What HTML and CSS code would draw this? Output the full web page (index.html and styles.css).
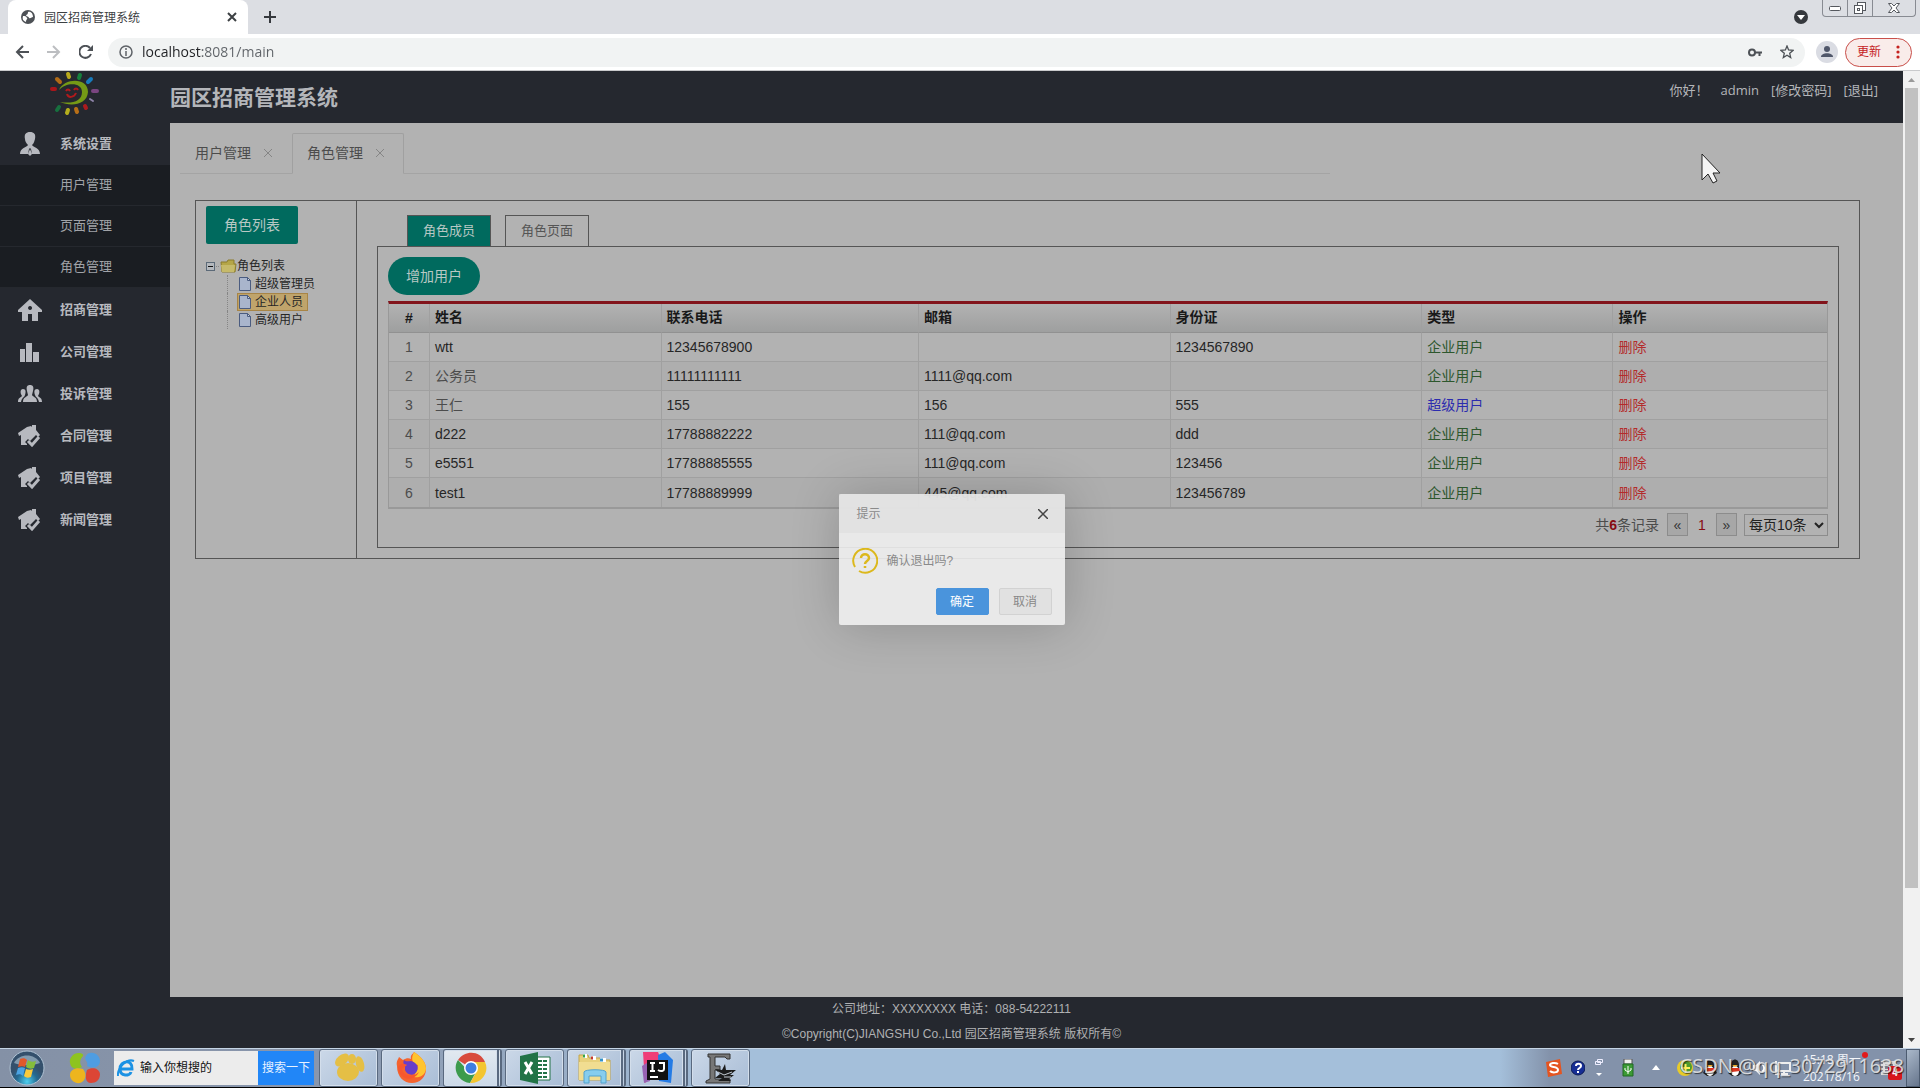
FILE: index.html
```html
<!DOCTYPE html>
<html lang="zh-CN">
<head>
<meta charset="utf-8">
<title>园区招商管理系统</title>
<link rel="stylesheet" href="styles.css">
</head>
<body>
<svg class="defs" aria-hidden="true">
  <symbol id="house-check" viewBox="0 0 24 22"><path fill="#b7b9bf" d="M0 8 9 2l4-1 1 1V0h4v5l4 5-2 2-2-2-6 6-2-2-3 3 2 2v1H3V10L1 11Z"/><path fill="none" stroke="#b7b9bf" stroke-width="3" d="m10 16 4 4 7-8"/></symbol>
  <symbol id="page-icon" viewBox="0 0 12 14"><path fill="#a9b5cc" stroke="#4b5c80" d="M.5.5h8l3 3v10H.5Z"/><path fill="#d0d6e2" stroke="#4b5c80" d="M8.500.5v3h3Z"/></symbol>
</svg>

<div class="tabstrip">
  <div class="browser-tab">
    <svg width="14" height="14" viewBox="0 0 14 14"><circle cx="7" cy="7" r="7" fill="#4d5156"/><path fill="#fff" d="M2 6c2 0 3 0 4 2 1 1-1 1-1 4C2 11 1 9 2 6ZM7 2c3-1 5 2 5 5-2 0-2 2-4 1 0-2-3-1-3-3 1 0 2-1 2-3Z"/></svg>
    <span class="browser-title">园区招商管理系统</span>
    <button class="bare" aria-label="关闭标签页"><svg width="10" height="10" viewBox="0 0 10 10"><path d="m1 1 8 8M9 1 1 9" stroke="#3c4043" stroke-width="2"/></svg></button>
  </div>
  <button class="bare" aria-label="新标签页"><svg width="12" height="12" viewBox="0 0 12 12"><path d="M6 0v12M0 6h12" stroke="#35383d" stroke-width="2"/></svg></button>
  <div class="grow"></div>
  <svg class="tab-search" width="14" height="14" viewBox="0 0 14 14"><circle cx="7" cy="7" r="7" fill="#35383d"/><path d="M3 5h8L7 10Z" fill="#fff"/></svg>
  <div class="window-buttons">
    <button aria-label="最小化"><svg width="12" height="5" viewBox="0 0 12 5"><rect x=".5" y=".5" width="11" height="4" rx="1" fill="#fff" stroke="#55585e"/></svg></button>
    <button aria-label="还原"><svg width="14" height="12" viewBox="0 0 14 12" fill="#fff" stroke="#55585e"><rect x="4.500" y=".5" width="8" height="8"/><rect x="1.500" y="3.500" width="8" height="8"/><rect x="4.500" y="6.500" width="2" height="2"/></svg></button>
    <button class="wide" aria-label="关闭"><svg width="12" height="10" viewBox="0 0 12 10"><path d="M.5.5h3L6 3 8.500.5h3L8 5l3.500 4.500h-3L6 7 3.500 9.500h-3L4 5Z" fill="#fff" stroke="#55585e"/></svg></button>
  </div>
</div>

<div class="toolbar">
  <button class="bare" aria-label="后退"><svg width="14" height="14" viewBox="0 0 14 14" fill="none" stroke="#4d5156" stroke-width="2"><path d="M14 7H2M8 1 2 7l6 6"/></svg></button>
  <button class="bare" aria-label="前进"><svg width="14" height="14" viewBox="0 0 14 14" fill="none" stroke="#bcbec1" stroke-width="2"><path d="M0 7h12M6 1l6 6-6 6"/></svg></button>
  <button class="bare" aria-label="刷新"><svg width="14" height="14" viewBox="0 0 14 14"><path d="M12 9a6 6 0 1 1-1-6" fill="none" stroke="#4d5156" stroke-width="2"/><path d="M14 0v6H8Z" fill="#4d5156"/></svg></button>
  <div class="omnibox">
    <svg width="14" height="14" viewBox="0 0 14 14"><circle cx="7" cy="7" r="6" fill="none" stroke="#5f6368" stroke-width="1.500"/><path d="M7 6v5M7 3v2" stroke="#5f6368" stroke-width="1.500"/></svg>
    <input class="url" aria-label="地址" value="localhost:8081/main">
    <svg width="14" height="9" viewBox="0 0 14 9" fill="none" stroke="#4d5156" stroke-width="2"><circle cx="4" cy="4.500" r="3"/><path d="M7 4.500h7M11.500 5v3"/></svg>
    <svg width="14" height="14" viewBox="0 0 14 14"><path d="m7 1 1.600 4 4.400.4-3.300 2.900 1 4.300L7 10.300l-3.700 2.300 1-4.300L1 5.400 5.400 5Z" fill="none" stroke="#4d5156" stroke-width="1.300"/></svg>
  </div>
  <svg class="profile" width="22" height="22" viewBox="0 0 22 22"><circle cx="11" cy="11" r="11" fill="#dadce3"/><circle cx="11" cy="8" r="3" fill="#50576a"/><path d="M5 16c0-5 12-5 12 0Z" fill="#50576a"/></svg>
  <button class="update">更新<svg width="4" height="14" viewBox="0 0 4 14" fill="#c5221f"><circle cx="2" cy="2" r="1.600"/><circle cx="2" cy="7" r="1.600"/><circle cx="2" cy="12" r="1.600"/></svg></button>
</div>

<div class="viewport">
  <div class="app">
    <nav class="sidebar">
      <div class="logo"><svg width="52" height="46" viewBox="0 0 52 46">
        <path d="M10 19C15 7 39 6 39 21 38 34 22 36 11 31c13 2 22-1 22-10 0-10-16-10-23-2Z" fill="#759a16"/>
        <path d="M17 20c1-2 3-2 4 0m4-1c1-2 3-2 4 0M18 23c1 4 7 4 9-1" fill="none" stroke="#b01a1c" stroke-width="2"/>
        <g stroke-width="4" stroke-linecap="round"><path d="m19 3 1 3" stroke="#b8a91c"/><path d="m31 4-1 3" stroke="#16803c"/><path d="m42 8-3 3" stroke="#177bbd"/><path d="m8 8 3 3" stroke="#b26b16"/><path d="m3 18 3 0" stroke="#a8161b"/><path d="m44 20 4 0" stroke="#7a4580"/><path d="m41 28 3 2" stroke="#8d83a8" stroke-width="2"/><path d="m36 35 1 2" stroke="#aa1b1e"/><path d="m27 38 1 3" stroke="#b86f17"/><path d="m19 39-1 3" stroke="#b5ae1d"/><path d="m10 36-2 3" stroke="#176f3e"/></g>
      </svg></div>
      <a class="nav-item" href="#"><svg width="22" height="24" viewBox="0 0 22 24"><path fill="#b7b9bf" d="M11 0c4 0 6 2 5 7-1 4-2 5-3 6 1 2 8 3 8 9h-8l-1-5-1-1-1 1-1 5H1c0-6 7-7 8-9-2-2-3-4-3-6C5 2 7 0 11 0Zm0 17 2 5-2 2-2-2Z"/></svg><span>系统设置</span></a>
      <div class="submenu">
        <a href="#">用户管理</a>
        <a href="#">页面管理</a>
        <a href="#">角色管理</a>
      </div>
      <a class="nav-item" href="#"><svg width="24" height="22" viewBox="0 0 24 22"><path fill="#b7b9bf" fill-rule="evenodd" d="M12 0 24 11v2h-4v9h-6v-7h-4v7H4v-9H0v-2Zm0 7a2 2 0 1 0 .1 0Z"/></svg><span>招商管理</span></a>
      <a class="nav-item" href="#"><svg width="22" height="20" viewBox="0 0 22 20"><path fill="#b7b9bf" d="M1 7h5v13H1ZM7 1h6v19H7ZM14 10h6v10h-6Z"/></svg><span>公司管理</span></a>
      <a class="nav-item" href="#"><svg width="24" height="18" viewBox="0 0 24 18"><path fill="#b7b9bf" d="M12 0c3 0 4 2 3 6l-1 4c1 2 5 2 5 7H5c0-5 4-5 5-7L9 6C8 2 9 0 12 0ZM5 4c3 0 3 3 2 6-1 3-3 2-4 7H0c0-4 2-4 4-6C2 8 2 4 5 4Zm14 0c3 0 3 4 1 7 2 2 4 2 4 6h-3c-1-5-3-4-4-7-1-3-1-6 2-6Z"/></svg><span>投诉管理</span></a>
      <a class="nav-item" href="#"><svg width="24" height="22"><use href="#house-check"/></svg><span>合同管理</span></a>
      <a class="nav-item" href="#"><svg width="24" height="22"><use href="#house-check"/></svg><span>项目管理</span></a>
      <a class="nav-item" href="#"><svg width="24" height="22"><use href="#house-check"/></svg><span>新闻管理</span></a>
    </nav>

    <header class="header">
      <h1>园区招商管理系统</h1>
      <div class="account"><span>你好！</span><span>admin</span><a href="#">[修改密码]</a><a href="#">[退出]</a></div>
    </header>

    <main class="content">
      <div class="page-tabs">
        <a class="page-tab" href="#">用户管理<svg width="10" height="10" viewBox="0 0 10 10"><path d="m1 1 8 8M9 1 1 9" stroke="#858585"/></svg></a>
        <a class="page-tab active" href="#">角色管理<svg width="10" height="10" viewBox="0 0 10 10"><path d="m1 1 8 8M9 1 1 9" stroke="#858585"/></svg></a>
      </div>
      <div class="panel">
        <section class="roles">
          <button class="btn">角色列表</button>
          <ul class="tree">
            <li class="root"><svg width="31" height="16" viewBox="1 0 31 16"><rect x="1.500" y="4.500" width="8" height="8" fill="#b4b8bd" stroke="#5c6a78"/><path d="M3 8.500h5" stroke="#111"/><path d="M11 8.500h4" stroke="#888" stroke-dasharray="1 1"/><path d="M16 4h6l1-2h6v4h2l-1 8H17Z" fill="#b5a648" stroke="#8c7d2d"/><path d="M16 7h14l-1 7H17Z" fill="#c6ba6a"/></svg>角色列表</li>
            <li class="leaf"><span class="node"><svg width="12" height="14"><use href="#page-icon"/></svg>超级管理员</span></li>
            <li class="leaf"><span class="node selected"><svg width="12" height="14"><use href="#page-icon"/></svg>企业人员</span></li>
            <li class="leaf"><span class="node"><svg width="12" height="14"><use href="#page-icon"/></svg>高级用户</span></li>
          </ul>
        </section>
        <section class="detail">
          <div class="detail-tabs">
            <button class="detail-tab active">角色成员</button>
            <button class="detail-tab">角色页面</button>
          </div>
          <div class="members">
            <button class="btn round">增加用户</button>
            <table class="grid">
              <colgroup><col class="c-num"><col class="c-name"><col class="c-phone"><col class="c-mail"><col class="c-id"><col class="c-type"><col></colgroup>
              <thead><tr><th>#</th><th>姓名</th><th>联系电话</th><th>邮箱</th><th>身份证</th><th>类型</th><th>操作</th></tr></thead>
              <tbody>
                <tr><td>1</td><td>wtt</td><td>12345678900</td><td></td><td>1234567890</td><td class="corp">企业用户</td><td><a href="#">删除</a></td></tr>
                <tr><td>2</td><td class="cjk">公务员</td><td>11111111111</td><td>1111@qq.com</td><td></td><td class="corp">企业用户</td><td><a href="#">删除</a></td></tr>
                <tr><td>3</td><td class="cjk">王仁</td><td>155</td><td>156</td><td>555</td><td class="super">超级用户</td><td><a href="#">删除</a></td></tr>
                <tr><td>4</td><td>d222</td><td>17788882222</td><td>111@qq.com</td><td>ddd</td><td class="corp">企业用户</td><td><a href="#">删除</a></td></tr>
                <tr><td>5</td><td>e5551</td><td>17788885555</td><td>111@qq.com</td><td>123456</td><td class="corp">企业用户</td><td><a href="#">删除</a></td></tr>
                <tr><td>6</td><td>test1</td><td>17788889999</td><td>445@qq.com</td><td>123456789</td><td class="corp">企业用户</td><td><a href="#">删除</a></td></tr>
              </tbody>
            </table>
            <div class="pager">
              <span>共<b>6</b>条记录</span>
              <button>«</button>
              <span class="current">1</span>
              <button>»</button>
              <select aria-label="每页条数"><option>每页10条</option></select>
            </div>
          </div>
        </section>
      </div>
    </main>

    <footer class="footer">
      <p>公司地址：XXXXXXXX 电话：088-54222111</p>
      <p>©Copyright(C)JIANGSHU Co.,Ltd 园区招商管理系统 版权所有©</p>
    </footer>

    <div class="modal-layer">
      <div class="dialog" role="dialog" aria-labelledby="dialog-title">
        <div class="dialog-head"><span id="dialog-title">提示</span><button class="bare" aria-label="关闭"><svg width="10" height="10" viewBox="0 0 10 10"><path d="m0 0 10 10M10 0 0 10" stroke="#444" stroke-width="1.500"/></svg></button></div>
        <div class="dialog-body"><svg width="26" height="26" viewBox="0 0 26 26" fill="none" stroke="#dcb81c" stroke-width="2"><path d="M3 19a12 12 0 1 1 4 4"/><path d="M9 10c0-5 8-5 8 0 0 3-4 3-4 6M13 18v2" stroke-width="2.500"/></svg><span>确认退出吗?</span></div>
        <div class="dialog-actions"><button class="ok">确定</button><button>取消</button></div>
      </div>
    </div>
  </div>
  <div class="scrollbar">
    <svg width="17" height="17" viewBox="0 0 17 17"><path d="M5 11h7L8.500 7Z" fill="#9a9a9a"/></svg>
    <div class="thumb"></div>
    <div class="grow"></div>
    <svg width="17" height="17" viewBox="0 0 17 17"><path d="M5 7h7l-3.500 4Z" fill="#444"/></svg>
  </div>
</div>

<div class="taskbar">
  <svg class="orb" width="36" height="36" viewBox="0 0 36 36"><defs><radialGradient id="orb" cy=".9"><stop offset="0" stop-color="#4fd0f0"/><stop offset=".6" stop-color="#246a92"/><stop offset="1" stop-color="#34506c"/></radialGradient></defs><circle cx="18" cy="18" r="17" fill="url(#orb)" stroke="#b0c3d4"/><path d="M5 13C10 3 26 3 31 13c-8 3-18 3-26 0Z" fill="#b6cbdb" opacity=".6"/><path d="M11 9c3-1 5-1 7 1l-2 7c-2-1-4-1-7 0Z" fill="#e0592b"/><path d="M19 10c2 2 5 2 8 1l-2 7c-3 1-5 1-8-1Z" fill="#85bd3c"/><path d="M9 18c3-1 5-1 7 0l-2 8c-2-2-4-2-7-1Z" fill="#4ba3e3"/><path d="M17 19c2 1 5 1 7 0l-2 8c-3 1-5 1-7-1Z" fill="#fbca3a"/></svg>
  <svg class="pinwheel" width="32" height="32" viewBox="0 0 32 32"><path d="M10 1c-6 0-10 5-9 10 1 6 6 7 12 4-3-4-2-8 1-11 1-2-2-3-4-3Z" fill="#8ec31f"/><path d="M21 1c6-1 10 4 10 8 0 7-8 8-13 5 2-5-4-6-1-10 1-2 2-3 4-3Z" fill="#4f9de2"/><path d="M31 22c0 6-4 9-9 9-6 0-6-7-4-13 5-3 12-2 13 4Z" fill="#dc4535"/><path d="M14 17c4 5 3 12-3 14C6 32 1 28 1 23c0-6 7-8 13-6Z" fill="#edb51e"/></svg>
  <form class="search">
    <svg width="18" height="20" viewBox="0 0 18 20"><path d="M3 11h12c1-10-12-9-12 0 0 8 10 7 11 3" fill="none" stroke="#1c92e4" stroke-width="3"/><path d="M1 18C0 10 10 0 17 3" fill="none" stroke="#1c92e4" stroke-width="2"/></svg>
    <input aria-label="搜索" value="输入你想搜的">
    <button type="button">搜索一下</button>
  </form>
  <div class="tasks">
    <button class="task" aria-label="应用"><svg width="32" height="32" viewBox="0 0 32 32" fill="#e5bf45"><ellipse cx="15" cy="20" rx="11" ry="9"/><ellipse cx="9" cy="8" rx="8" ry="5" transform="rotate(-40 9 8)"/><ellipse cx="19" cy="7" rx="4" ry="5"/><ellipse cx="27" cy="12" rx="4" ry="8" transform="rotate(-15 27 12)"/></svg></button>
    <button class="task" aria-label="Firefox"><svg width="32" height="32" viewBox="0 0 32 32"><path d="M2 14C1 9 3 8 4 5l4 3c3-2 6-2 8-1-1-4 2-5 3-7 8 5 12 11 12 17 0 8-6 14-14 14S2 25 2 14Z" fill="#f4632e"/><path d="M19 0c8 5 12 11 12 17-1 7-7 9-12 8l4-12c-5-1-8-5-4-13Z" fill="#ffc42f"/><path d="M10 13c-2-1-2-3-1-5 2 2 4 1 7 1 6 2 8 6 6 10-2 5-10 5-12-1Z" fill="#683ec8"/><path d="M3 15c3-5 7-3 9-2l-5 4c1 7 11 9 17 3-5 10-20 9-21-5Z" fill="#f7572e"/></svg></button>
    <button class="task stack lit" aria-label="Chrome"><svg width="32" height="32" viewBox="0 0 32 32"><path d="M16 16 3 8C10-2 25-2 30 10H16Z" fill="#d84b3d"/><path d="M3 8c-6 9 0 22 12 23l7-13-6 4Z" fill="#3c9b4d"/><path d="M16 10h14c5 10-4 22-15 21l7-12Z" fill="#f3c530"/><circle cx="16" cy="16" r="7" fill="#fff"/><circle cx="16" cy="16" r="5.500" fill="#3f7de0"/></svg></button>
    <button class="task" aria-label="Excel"><svg width="32" height="32" viewBox="0 0 32 32"><path d="M17 5h14v23H17Z" fill="#fff" stroke="#237346"/><path d="M19 9h10M19 13h10M19 17h10M19 21h10M19 25h10" stroke="#237346" stroke-width="2" stroke-dasharray="4 1"/><path d="m1 4 18-4v32L1 28Z" fill="#217346"/><path d="m6 10 7 12M13 10 6 22" stroke="#fff" stroke-width="3"/></svg></button>
    <button class="task stack" aria-label="资源管理器"><svg width="34" height="32" viewBox="0 0 34 32"><path d="M1 3h9l1 3h11l1 2h9v20H1Z" fill="#e8d17c" stroke="#c4a64a"/><path d="M5 4h4M13 6h5M22 8h6" stroke="#fff" stroke-width="4"/><path d="M5 4h2" stroke="#36a34a" stroke-width="3"/><path d="M13 6h2" stroke="#c43a31" stroke-width="3"/><path d="M22 8h3" stroke="#3391c9" stroke-width="3"/><path d="M1 10h31v18H1Z" fill="#f1dd91"/><path d="M6 31V20c0-3 22-3 22 0v11h-5v-7H11v7Z" fill="#86cdee" stroke="#52a2cd"/></svg></button>
    <button class="task stack" aria-label="IntelliJ IDEA"><svg width="32" height="32" viewBox="0 0 32 32"><path d="M2 0h15l5 12L4 31Z" fill="#ef3e78"/><path d="m17 3 7-3 8 8-2 23-12-2Z" fill="#247be5"/><path d="M1 14 9 9v20l-6 2Z" fill="#9763b2"/><path fill="#111" d="M6 8h21v20H6Z"/><path d="M9 11h5M11.500 11v8M9 19h5M18 11h5v6c0 2-3 3-6 1M9 25h8" stroke="#fff" stroke-width="2" fill="none"/></svg></button>
    <button class="task" aria-label="编辑器"><svg width="34" height="32" viewBox="0 0 34 32"><path d="M4 2h22v5h-3l-2-2H11v9h5v4h-5v9h15v4H2v-2l4-2V5H4Z" fill="#777" stroke="#333"/><path d="m11 17 7 1 3-6 1 6h10l-6 5h4l-5 4 2 2H14l4-3h-7l5-4Z" fill="#1c1c1c"/><path d="m14 20 6 3 8-3M20 25h7" fill="none" stroke="#c5ccd4"/></svg></button>
  </div>
  <div class="grow"></div>
  <div class="tray">
    <svg width="16" height="18" viewBox="0 0 16 18"><path fill="#e45420" d="m0 3 14-3 2 15-14 3Z"/><path d="M12 5c-3-2-8-1-8 1 0 3 8 1 8 5 0 3-6 3-8 1" fill="none" stroke="#fff" stroke-width="2"/></svg>
    <svg width="14" height="16" viewBox="0 0 14 16"><circle cx="7" cy="8" r="7" fill="#162d94" stroke="#0c1b55"/><path d="M5 6c0-3 5-3 5 0 0 2-3 2-3 4M7 11v2" stroke="#fff" stroke-width="2" fill="none"/></svg>
    <svg width="10" height="22" viewBox="0 0 10 22"><path d="M3.500 2.500h5v3h-5ZM1.500 4.500h5v3h-5Z" fill="none" stroke="#eef"/><path d="M2 16h6l-3 3Z" fill="#fff"/></svg>
    <svg class="usb" width="12" height="18" viewBox="0 0 12 18"><path d="M2 0h8v5H2Z" fill="#eee" stroke="#555"/><path d="M1 5h10v12H1Z" fill="#3c9b35" stroke="#1e6923"/><path d="M6 15V7M3 9v2l3 2 3-2V9" fill="none" stroke="#fff"/></svg>
    <svg class="more" width="8" height="6" viewBox="0 0 8 6"><path d="M0 5h8L4 0Z" fill="#fff"/></svg>
    <svg width="16" height="16" viewBox="0 0 16 16"><circle cx="8" cy="8" r="8" fill="#e8cb29"/><circle cx="9" cy="7" r="6" fill="#4e9b2d"/><path d="M4 8h9M8.500 4v9" stroke="#fff15c" stroke-width="2"/></svg>
    <svg width="16" height="18" viewBox="0 0 16 18"><path d="M4 8c-1-10 9-10 8 0l3 6-4 3H5l-4-3Z" fill="#222"/><ellipse cx="8" cy="12" rx="4" ry="5" fill="#fff"/><path d="M3 9h10v3l-8 1Z" fill="#d9361f"/><path d="M5 6h6l-3 2Z" fill="#efae25"/></svg>
    <svg width="16" height="18" viewBox="0 0 16 18"><path d="M4 8c-1-10 9-10 8 0l3 6-4 3H5l-4-3Z" fill="#222"/><ellipse cx="8" cy="12" rx="4" ry="5" fill="#fff"/><path d="M3 9h10v3l-8 1Z" fill="#d9361f"/><path d="M5 6h6l-3 2Z" fill="#efae25"/></svg>
    <svg width="14" height="16" viewBox="0 0 14 16"><path d="M1 5h3l4-4v14l-4-4H1Z" fill="#fff"/><path d="M10 4c3 2 3 6 0 8" fill="none" stroke="#fff" stroke-width="2"/></svg>
    <svg width="16" height="16" viewBox="0 0 16 16"><path d="M4 3h11v8H4ZM9 11v3M6 14h7M1 1v13h4" fill="none" stroke="#eee" stroke-width="2"/></svg>
    <div class="clock"><span>15:18 周一</span><span>2021/8/16</span><i class="dot"></i></div>
    <div class="notice"><svg width="18" height="18" viewBox="0 0 18 18"><path d="M2 2h15v14H2Z" fill="#ddd"/><path d="M0 4h4M0 8h4M0 12h4M6 6h8M6 9h8M6 12h5" stroke="#667" stroke-width="1.500"/></svg><b>4</b></div>
    <div class="watermark">CSDN @qq_3072911638</div>
  </div>
  <button class="show-desktop" aria-label="显示桌面"></button>
</div>

<svg class="cursor" width="20" height="32" viewBox="0 0 20 32"><path d="M1 1v26l6-6 5 9 4-2-4-8h7Z" fill="#f4f4f4" stroke="#222"/></svg>
</body>
</html>
```

FILE: styles.css
```css
* { box-sizing: border-box; }
body {
  margin: 0;
  height: 100vh;
  display: flex;
  flex-direction: column;
  overflow: hidden;
  background: #000;
  font: 14px/20px "Liberation Sans", "Noto Sans CJK SC", sans-serif;
}
a { color: inherit; text-decoration: none; }
button, input, select { font: inherit; margin: 0; padding: 0; border: 0; }
ul, p, h1 { margin: 0; padding: 0; list-style: none; }
svg { flex: none; display: block; }
.defs { position: absolute; width: 0; height: 0; }
.bare { background: none; display: flex; }
.grow { flex: 1; }

/* Browser frame */
.tabstrip { flex: none; height: 34px; display: flex; align-items: center; background: #dcdee3; }
.browser-tab {
  width: 240px; height: 34px; margin: 0 16px 0 8px; padding: 0 11px 0 13px;
  display: flex; align-items: center; gap: 9px;
  background: #fff; border-radius: 8px 8px 0 0;
}
.browser-title { flex: 1; padding-top: 2px; font-size: 12px; color: #3c4043; }
.tab-search { margin-right: 14px; }
.window-buttons {
  align-self: flex-start; display: flex; height: 17px; margin-right: 4px;
  border: 1px solid #888b92; border-top: 0; border-radius: 0 0 4px 4px;
}
.window-buttons button { width: 25px; display: flex; align-items: center; justify-content: center; background: none; border-right: 1px solid #888b92; }
.window-buttons .wide { width: 42px; border: 0; }
.toolbar {
  flex: none; height: 37px; padding: 0 8px 0 15px;
  display: flex; align-items: center; gap: 18px;
  background: #fff; border-bottom: 1px solid #c9cacc;
}
.omnibox {
  flex: 1; height: 29px; margin-left: -3px; padding: 0 11px;
  display: flex; align-items: center; gap: 9px;
  border-radius: 15px; background: #f1f3f3;
}
.omnibox svg:last-child { margin-left: 9px; }
.url {
  flex: 1; height: 22px; outline: 0;
  font: 14px/22px "Open Sans", sans-serif;
  color: #5f6368;
  background: linear-gradient(90deg, #202124 60px, #5f6368 60px);
  background-clip: text;
  -webkit-text-fill-color: transparent;
}
.profile { margin-left: -7px; }
.update {
  width: 67px; height: 29px; margin-left: -11px; padding: 0 11px;
  display: flex; align-items: center; justify-content: space-between;
  border: 1px solid #c94f4a; border-radius: 15px; background: #f9ecea;
  color: #c5221f; font-size: 12px;
}

/* Application shell */
.viewport { flex: 1; min-height: 0; display: flex; }
.app {
  flex: 1; position: relative;
  display: grid; grid-template: 52px 1fr 51px / 170px 1fr;
  background: #25282f;
}
.header { display: flex; justify-content: space-between; color: #b4b6ba; }
.header h1 { padding-top: 12px; font-size: 21px; line-height: 30px; }
.account { display: flex; gap: 12px; padding: 9px 25px 0 0; font: 13px/20px "Open Sans", "Noto Sans CJK SC", sans-serif; }

.sidebar { grid-row: 1 / 3; color: #b7b9bf; font-size: 13px; }
.logo { height: 52px; padding-left: 49px; }
.nav-item { height: 42px; display: flex; align-items: center; font-weight: bold; }
.nav-item svg { width: 60px; }
.submenu { margin-bottom: 1px; background: #1a1d22; }
.submenu a { display: block; height: 41px; padding-left: 60px; line-height: 40px; border-bottom: 1px solid #25282e; color: #a1a3a8; }

.content { padding: 10px 43px 0 10px; background: #b2b2b2; }
.page-tabs { height: 41px; max-width: 1150px; display: flex; border-bottom: 1px solid #a4a4a4; }
.page-tab {
  width: 112px; height: 41px; padding: 0 19px 2px 15px;
  display: flex; align-items: center; justify-content: space-between; color: #4c4c4c;
}
.page-tab.active { border: 1px solid #a0a0a0; border-bottom-color: #b2b2b2; border-radius: 2px 2px 0 0; padding-left: 14px; padding-right: 18px; }

.panel { margin: 26px 0 0 15px; height: 359px; display: flex; border: 1px solid #555; }
.roles { width: 161px; padding: 5px 10px; border-right: 1px solid #555; }
.btn {
  display: block; width: 92px; height: 38px;
  border-radius: 2px; background: #006a5e; color: #b8c8c4;
}
.btn.round { border-radius: 19px; }
.tree { margin-top: 13px; font-size: 12px; line-height: 18px; color: #262626; }
.root { display: flex; align-items: center; }
.leaf { margin-left: 21px; padding-left: 9px; border-left: 1px dotted #858585; }
.node { display: inline-flex; height: 18px; align-items: center; gap: 4px; padding: 0 4px 0 1px; border: 1px solid transparent; line-height: 16px; vertical-align: top; }
.node.selected { background: #bfa46b; border-color: #a88546; }

.detail { flex: 1; padding: 14px 20px 0; }
.detail-tabs { display: flex; gap: 14px; padding-left: 30px; }
.detail-tab {
  width: 84px; height: 31px; border: 1px solid #555; border-bottom: 0;
  background: none; color: #555; font-size: 13px;
}
.detail-tab.active { background: #006a5e; color: #b8c8c4; }
.members { height: 302px; padding: 10px 10px 0; border: 1px solid #555; }

.grid {
  width: 100%; margin-top: 6px; table-layout: fixed;
  border-collapse: separate; border-spacing: 0;
  border: solid #999; border-width: 0 1px 2px; border-top: 3px solid #82141b;
}
.c-num { width: 41px; }
.c-name { width: 16.1%; }
.c-phone { width: 17.9%; }
.c-mail, .c-id { width: 17.5%; }
.c-type { width: 13.3%; }
.grid th, .grid td { height: 29px; padding: 0 5px; text-align: left; border-right: 1px solid #a0a0a0; border-bottom: 1px solid #a0a0a0; }
.grid th:first-child, .grid td:first-child { padding: 0; text-align: center; }
.grid th:last-child, .grid td:last-child { border-right: 0; }
.grid tbody tr:last-child td { border-bottom: 0; }
.grid th { padding-bottom: 2px; background: linear-gradient(#b2b2b2, #9e9f9f); border-bottom-color: #919191; color: #191919; }
.grid td { color: #262626; }
.grid td:first-child, .grid .cjk { color: #4c4c4c; }
.grid tbody tr:nth-child(even) { background: #aeaeae; }
.grid .corp { color: #2d572d; }
.grid .super { color: #2c2cae; }
.grid td a { color: #b42b2b; }

.pager { display: flex; justify-content: flex-end; align-items: center; margin-top: 4px; color: #4c4c4c; }
.pager b, .pager .current { color: #870c12; }
.pager .current { width: 28px; text-align: center; }
.pager button { width: 21px; height: 23px; border: 1px solid #8c8c8c; background: #a7a7a7; color: #333; }
.pager span:first-child { margin-right: 8px; }
.pager select { width: 84px; height: 22px; margin-left: 7px; border: 1px solid #8c8c8c; background: #b2b2b2; color: #222; }

.footer { grid-column: 1 / 3; text-align: center; font-size: 12px; line-height: 25px; color: #b0b1b3; }

/* Confirm dialog */
.modal-layer { position: absolute; inset: 0; display: flex; align-items: center; justify-content: center; }
.dialog {
  width: 226px; background: rgba(238, 238, 238, .9); color: #8a8a8a; font-size: 12px;
  border-radius: 2px; box-shadow: 1px 1px 50px rgba(0, 0, 0, .2);
}
.dialog-head { height: 39px; padding: 0 17px 0 18px; display: flex; align-items: center; justify-content: space-between; background: rgba(220, 220, 220, .5); }
.dialog-body { height: 55px; padding: 0 13px; display: flex; align-items: center; gap: 9px; }
.dialog-actions { display: flex; justify-content: flex-end; gap: 10px; padding: 0 13px 10px; }
.dialog-actions button { width: 53px; height: 27px; border: 1px solid #d2d2d2; border-radius: 2px; background: #e1e1e1; color: #888; }
.dialog-actions .ok { border-color: #4a94dc; background: #4a94dc; color: #fff; }

.scrollbar { width: 17px; display: flex; flex-direction: column; background: #f1f1f1; }
.thumb { height: 800px; max-height: 82%; margin: 0 2px; background: #c1c1c1; }

/* Taskbar */
.taskbar {
  flex: none; height: 39px; margin-bottom: 1px;
  display: flex; align-items: center;
  border-top: 1px solid #c5d5e5;
  background: linear-gradient(90deg, #8491a6 0, #8996ac 320px, #a4bfda 750px, #a4bfda calc(100% - 420px), #8392aa calc(100% - 370px), #8392aa 100%);
}
.orb { margin: 0 24px 0 9px; }
.search { display: flex; align-items: center; width: 200px; height: 34px; margin: 0 5px 0 13px; background: #ececec; font-size: 12px; }
.search svg { margin: 0 5px 0 3px; }
.search input { flex: 1; width: 50px; background: none; color: #111; }
.search button { width: 56px; height: 34px; background: #2186f7; color: #e8f2ff; }
.tasks { display: flex; gap: 3px; }
.task {
  width: 59px; height: 38px; display: flex; align-items: center; justify-content: center;
  border: 1px solid #59697f; border-radius: 3px;
  background: linear-gradient(135deg, #cbd8e8, #a9bdd6);
  box-shadow: inset 0 0 0 1px #d3deeb;
}
.task.stack { border-right: 5px double #59697f; }
.task.lit { background: linear-gradient(#e2e9f0, #cbd9e8); }
.tray { position: relative; display: flex; align-items: center; gap: 9px; height: 38px; }
.tray .usb { margin-left: 9px; }
.tray .more { margin: 0 8px 0 9px; }
.clock { position: relative; width: 68px; display: flex; flex-direction: column; padding-left: 3px; color: #f4f6fa; font: 12px/17px "Open Sans", "Noto Sans CJK SC", sans-serif; }
.dot { position: absolute; top: 1px; right: 0; width: 6px; height: 6px; border-radius: 3px; background: #e21a1a; }
.notice { position: relative; width: 27px; padding-left: 2px; }
.notice b { position: absolute; left: 11px; top: 7px; width: 14px; height: 14px; border-radius: 2px; background: #d8151b; color: #fff; font-size: 10px; line-height: 14px; text-align: center; }
.watermark { position: absolute; right: 0; top: 3px; font: 20px/28px "Noto Sans", sans-serif; color: rgba(235, 235, 235, .85); text-shadow: 1px 1px 1px rgba(0, 0, 0, .6); white-space: nowrap; }
.show-desktop { width: 14px; height: 38px; margin-left: 2px; border: 1px solid #4c5b70; background: linear-gradient(135deg, #aab8ca, #66758c); }

.cursor { position: absolute; left: 1701px; top: 153px; }
```
